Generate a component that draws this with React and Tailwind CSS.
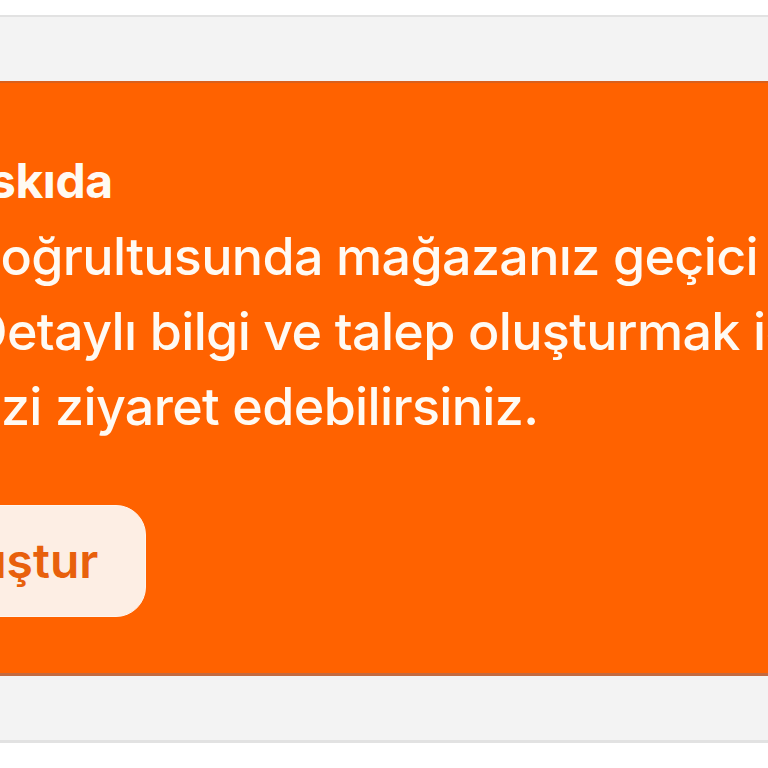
import React from 'react';

// Cropped view of a store-suspension notice banner (left edge scrolled out of view)
export default function App() {
  return (
    <div
      className="w-[768px] h-[768px] overflow-hidden bg-white"
      style={{ fontFamily: 'Inter, "Noto Sans", sans-serif' }}
    >
      <div className="h-[15px] bg-white" />
      <div className="h-[66px] bg-[#f3f3f3] border-t-2 border-[#e2e2e2]" />

      <div className="bg-[#ff6200] border-t-2 border-[#d9601c] border-b-[3px] border-b-[#c26a40] pt-[60px] pb-[56px]">
        <div className="flex flex-col items-start text-[#fffaf3]">
          <h2 className="-ml-[46px] whitespace-nowrap text-[48px] leading-[76px] font-bold tracking-[-0.4px]">
            Askıda
          </h2>
          <div className="text-[52px] leading-[75px] font-medium tracking-[-0.65px]">
            <p className="-ml-[31px] whitespace-nowrap">doğrultusunda mağazanız geçici olarak</p>
            <p className="-ml-[30px] whitespace-nowrap">Detaylı bilgi ve talep oluşturmak için</p>
            <p className="-ml-[43px] whitespace-nowrap">bizi ziyaret edebilirsiniz.</p>
          </div>
          <button className="-ml-[259px] mt-[61px] h-[112px] px-[47px] rounded-[30px] bg-[#fdeee4] border border-[#fff6f0] text-[#e8600c] text-[48px] font-semibold whitespace-nowrap">
            Talep Oluştur
          </button>
        </div>
      </div>

      <div className="h-[64px] bg-[#f3f3f3]" />
      <div className="h-[3px] bg-[#e2e2e2]" />
      <div className="flex-1 bg-white" />
    </div>
  );
}
